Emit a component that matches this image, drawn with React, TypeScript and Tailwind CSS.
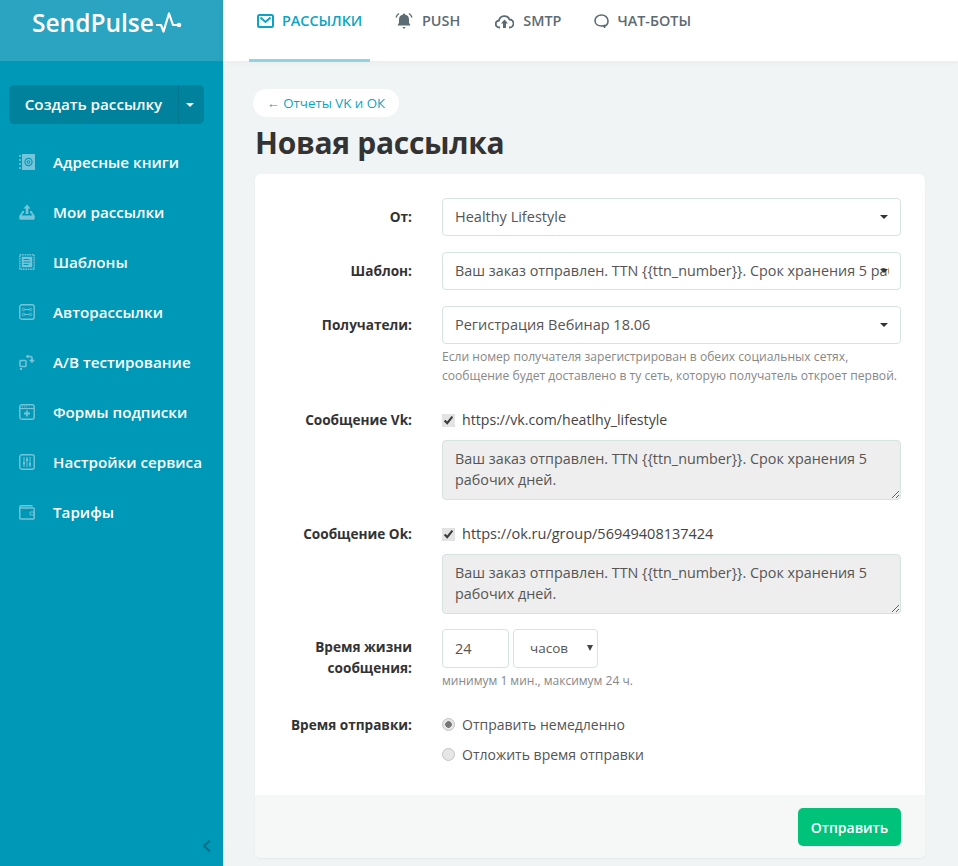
import React from "react";

const ic = "#74c5d9";

function BookIcon() {
  return (
    <svg width="16" height="18" viewBox="0 0 16 18" fill="none">
      <rect x="3" y="1" width="13" height="16" fill={ic} />
      <path d="M1 2v2M1 6v2M1 10v2M1 14v2" stroke={ic} strokeWidth="1.6" />
      <circle cx="9.5" cy="9" r="3.6" stroke="#0098b7" strokeWidth="1.1" />
      <circle cx="9.5" cy="9" r="1.4" stroke="#0098b7" strokeWidth="1" />
    </svg>
  );
}
function SendIcon() {
  return (
    <svg width="16" height="16" viewBox="0 0 16 16" fill="none">
      <path d="M5 7H3.500L0.500 11.500V14.500a1 1 0 0 0 1 1h13a1 1 0 0 0 1-1V11.500L12.500 7H11v2h.8l1.700 3h-11l1.700-3H5z" fill={ic} />
      <rect x="0.500" y="11.500" width="15" height="4" rx="1" fill={ic} />
      <path d="M8 0.500 11.500 4.500H9.300V10H6.700V4.500H4.500z" fill={ic} />
    </svg>
  );
}
function TemplateIcon() {
  return (
    <svg width="16" height="16" viewBox="0 0 16 16" fill="none">
      <rect x="0.800" y="0.800" width="14.400" height="14.400" stroke={ic} strokeWidth="1.400" strokeDasharray="1.600 0.800" />
      <rect x="2.800" y="2.800" width="10.400" height="10.400" fill={ic} />
      <path d="M4.500 5.500h6M4.500 8h7M4.500 10.500h5" stroke="#0098b7" strokeWidth="1" />
    </svg>
  );
}
function AutoIcon() {
  return (
    <svg width="16" height="16" viewBox="0 0 16 16" fill="none">
      <rect x="0.800" y="0.800" width="14.400" height="14.400" rx="2" stroke={ic} strokeWidth="1.400" />
      <path d="M6 5.500h4.500M5.500 10.500h4.500" stroke={ic} strokeWidth="1" />
      <circle cx="4.500" cy="5.500" r="1.200" stroke={ic} strokeWidth="0.900" />
      <circle cx="11.500" cy="5.500" r="1.200" stroke={ic} strokeWidth="0.900" />
      <circle cx="4.500" cy="10.500" r="1.200" stroke={ic} strokeWidth="0.900" />
      <circle cx="11.500" cy="10.500" r="1.200" stroke={ic} strokeWidth="0.900" />
    </svg>
  );
}
function AbIcon() {
  return (
    <svg width="16" height="16" viewBox="0 0 16 16" fill="none">
      <rect x="1" y="6.500" width="6" height="6" rx="0.800" stroke={ic} strokeWidth="1.500" />
      <rect x="1" y="14" width="2" height="2" fill={ic} />
      <path d="M7 2.500h4.500a1.500 1.500 0 0 1 1.500 1.500v3" stroke={ic} strokeWidth="1.700" />
      <path d="M10 5.800h6L13 9.300z" fill={ic} />
      <path d="M9.500 0.500v4L6.800 2.500z" fill={ic} />
    </svg>
  );
}
function FormIcon() {
  return (
    <svg width="16" height="16" viewBox="0 0 16 16" fill="none">
      <rect x="0.800" y="0.800" width="14.400" height="14.400" rx="2" stroke={ic} strokeWidth="1.400" />
      <path d="M1 4.500h14" stroke={ic} strokeWidth="1.200" />
      <path d="M3 2.800h1M5 2.800h1M7 2.800h1" stroke={ic} strokeWidth="0.800" />
      <path d="M8 6.500v6M5 9.500h6" stroke={ic} strokeWidth="1.800" />
    </svg>
  );
}
function SlidersIcon() {
  return (
    <svg width="16" height="16" viewBox="0 0 16 16" fill="none">
      <rect x="0.800" y="0.800" width="14.400" height="14.400" rx="2" stroke={ic} strokeWidth="1.400" />
      <path d="M5 3v10M8 3v10M11 3v10" stroke={ic} strokeWidth="1" />
      <rect x="4" y="8" width="2" height="2.500" fill={ic} />
      <rect x="7" y="4.500" width="2" height="2.500" fill={ic} />
      <rect x="10" y="9" width="2" height="2.500" fill={ic} />
    </svg>
  );
}
function WalletIcon() {
  return (
    <svg width="16" height="15" viewBox="0 0 16 15" fill="none">
      <path d="M1 3h13.500a.7.7 0 0 1 .7.7v9.600a.7.7 0 0 1-.7.7H1.800a1 1 0 0 1-1-1V2a1.200 1.200 0 0 1 1.200-1.200h11.500" stroke={ic} strokeWidth="1.400" />
      <rect x="11" y="7" width="4" height="3" rx="0.500" stroke={ic} strokeWidth="1" />
    </svg>
  );
}

const nav: [string, React.ReactNode][] = [
  ["Адресные книги", <BookIcon />],
  ["Мои рассылки", <SendIcon />],
  ["Шаблоны", <TemplateIcon />],
  ["Авторассылки", <AutoIcon />],
  ["A/B тестирование", <AbIcon />],
  ["Формы подписки", <FormIcon />],
  ["Настройки сервиса", <SlidersIcon />],
  ["Тарифы", <WalletIcon />],
];

function Caret() {
  return <span className="absolute right-[12px] top-1/2 -mt-[2px] h-0 w-0 border-x-[4px] border-t-[4px] border-x-transparent border-t-[#333]" />;
}

function FakeSelect({ children, size = "text-[14.5px]" }: { children: React.ReactNode; size?: string }) {
  return (
    <div className={`relative flex h-[38px] w-full items-center overflow-hidden rounded-[4px] border border-[#d5e3e1] bg-white pl-3 pr-[11px] text-[#555] ${size}`}>
      <span className="overflow-hidden whitespace-nowrap">{children}</span>
      <Caret />
    </div>
  );
}

function Row({ label, children, className = "", labelClass = "leading-[22px]" }: { label: React.ReactNode; children: React.ReactNode; className?: string; labelClass?: string }) {
  return (
    <div className={`flex ${className}`}>
      <div className={`w-[157px] text-right text-[13.6px] font-bold text-[#333] ${labelClass}`}>{label}</div>
      <div className="ml-[30px] w-[459px]">{children}</div>
    </div>
  );
}

function Message({ url, size }: { url: string; size: string }) {
  return (
    <div>
      <label className={`mt-[1px] flex h-5 items-center text-[#444] ${size}`}>
        <input type="checkbox" checked readOnly className="m-0 h-[13px] w-[13px] accent-[#e4e4e4]" />
        <span className="ml-[7px]">{url}</span>
      </label>
      <textarea
        readOnly
        value="Ваш заказ отправлен. TTN {{ttn_number}}. Срок хранения 5 рабочих дней."
        className="mt-[10px] block h-[60px] w-full rounded-[4px] border border-[#d5e3e1] bg-[#eeeeee] px-3 py-[7px] text-[14.35px] leading-[21px] text-[#555] outline-none"
      />
    </div>
  );
}

const radio = "m-0 h-[13px] w-[13px] appearance-none rounded-full border border-[#c4c4c4] bg-[#e6e6e6]";

export default function App() {
  return (
    <div className="flex h-[866px] w-[958px] overflow-hidden bg-[#f1f4f5] font-['Open_Sans','Noto_Sans',sans-serif]">
      <aside className="flex w-[223px] shrink-0 flex-col bg-[#0098b7]">
        <div className="flex h-[61px] items-start bg-[#2aa4c1] pl-[32px] pt-[6px]">
          <span className="text-[24.5px] font-semibold leading-[34px] text-white">SendPulse</span>
          <svg width="28" height="24" viewBox="0 0 28 24" fill="none" className="ml-[2px] mt-[5px]">
            <path d="M0 14h5l2.500 6.500L13 2.500l4 11.500h6" stroke="#fff" strokeWidth="2.200" strokeLinejoin="round" />
            <circle cx="23" cy="14" r="2.300" fill="#fff" />
          </svg>
        </div>
        <div className="mx-[9px] mt-[24px] flex h-[39px] w-[195px] rounded-[5px] bg-[#00829d] text-white">
          <div className="flex flex-1 items-center justify-center text-[15.2px] font-semibold">Создать рассылку</div>
          <div className="relative w-[26px] border-l border-[#007790]">
            <span className="absolute left-[7px] top-[18px] h-0 w-0 border-x-[4px] border-t-[4px] border-x-transparent border-t-white" />
          </div>
        </div>
        <nav className="mt-[13px] flex flex-col">
          {nav.map(([t, icon]) => (
            <div key={t} className="flex h-[50px] items-center">
              <span className="flex w-[53px] pl-[19px]">{icon}</span>
              <span className="text-[15.2px] font-semibold text-white">{t}</span>
            </div>
          ))}
        </nav>
        <div className="mt-auto flex justify-end pb-[13px] pr-[10px]">
          <svg width="12" height="14" viewBox="0 0 12 14" fill="none">
            <path d="M9 1.500 3 7l6 5.500" stroke="#00708a" strokeWidth="2" />
          </svg>
        </div>
      </aside>

      <main className="flex min-w-0 flex-1 flex-col">
        <header className="flex h-[61px] shrink-0 bg-white pl-[26px] shadow-[0_1px_6px_rgba(0,0,0,0.04)]">
          <div className="flex h-[62px] w-[121px] items-start gap-[8px] border-b-[3px] border-[#93d3e0] pl-[8px] pt-[12px] text-[14.4px] font-semibold text-[#0aa5c4]">
            <svg width="17" height="14" viewBox="0 0 17 14" fill="none" className="mt-[2px]">
              <rect x="1" y="1" width="15" height="12" rx="1.500" stroke="#0aa5c4" strokeWidth="2" />
              <path d="M3.500 3.500 8.500 8l5-4.500" stroke="#0aa5c4" strokeWidth="2" />
            </svg>
            <span className="leading-[18px]">РАССЫЛКИ</span>
          </div>
          <div className="ml-[25px] flex items-start gap-[9px] pt-[12px] text-[14.4px] font-semibold leading-[18px] text-[#5d6b74]">
            <svg width="18" height="18" viewBox="0 0 18 18" fill="#5d6b74">
              <path d="M9 1.500a1.200 1.200 0 0 1 1.200 1.200c2.500.5 3.800 2.200 3.800 4.800v3.200l1.500 2.800H2.500L4 10.700V7.500c0-2.600 1.300-4.300 3.800-4.800A1.200 1.200 0 0 1 9 1.500z" />
              <path d="M7.300 15h3.400L9 17z" />
              <path d="M4 1.500C2.500 2.500 1.500 4 1 5.500M14 1.500c1.500 1 2.500 2.500 3 4" stroke="#5d6b74" strokeWidth="1.300" fill="none" />
            </svg>
            <span>PUSH</span>
          </div>
          <div className="ml-[35px] flex items-start gap-[9px] pt-[12px] text-[14.4px] font-semibold leading-[18px] text-[#5d6b74]">
            <svg width="19" height="15" viewBox="0 0 19 15" fill="none" className="mt-[2px]">
              <path d="M5 13.500H4.500a3.500 3.500 0 0 1-.5-7A5.500 5.500 0 0 1 14.500 5.500a4 4 0 0 1 0 8H14" stroke="#5d6b74" strokeWidth="1.800" />
              <path d="M9.500 5.500 13 9.500h-2V14H8V9.500H6z" fill="#5d6b74" />
            </svg>
            <span>SMTP</span>
          </div>
          <div className="ml-[33px] flex items-start gap-[8px] pt-[12px] text-[14.4px] font-semibold leading-[18px] text-[#5d6b74]">
            <svg width="15" height="15" viewBox="0 0 15 15" fill="none" className="mt-[2px]">
              <path d="M10.500 12.500c2-1 3.500-3 3.500-5.500C14 3.500 11 1 7.500 1S1 3.500 1 6.500 3.500 12 7.500 12c1 0 2-.1 3-.5v2.500" stroke="#5d6b74" strokeWidth="1.600" />
            </svg>
            <span>ЧАТ-БОТЫ</span>
          </div>
        </header>

        <div className="flex min-h-0 flex-1 flex-col pl-[32px] pr-[33px]">
          <div className="-ml-[2px] mt-[28px] self-start rounded-full bg-white px-[13.500px] py-[4px] text-[13.3px] leading-[20px] text-[#0aa5c4]">
            ← Отчеты VK и ОК
          </div>
          <h1 className="mt-[6px] text-[30px] font-bold leading-[40px] tracking-[-0.3px] text-[#333]">Новая рассылка</h1>
          <section className="mt-[11px] flex flex-1 flex-col overflow-hidden rounded-[6px] bg-white shadow-[0_1px_2px_rgba(0,0,0,0.05)]">
            <div className="flex-1 pt-[24px]">
              <Row label="От:" className="items-center">
                <FakeSelect>Healthy Lifestyle</FakeSelect>
              </Row>
              <Row label="Шаблон:" className="mt-[16px] items-center">
                <FakeSelect size="text-[14.35px]">Ваш заказ отправлен. TTN {"{{ttn_number}}"}. Срок хранения 5 рабочих дней.</FakeSelect>
              </Row>
              <Row label="Получатели:" className="mt-[16px]" labelClass="pt-[8px] leading-[22px]">
                <FakeSelect>Регистрация Вебинар 18.06</FakeSelect>
                <p className="mt-[3px] text-[12.1px] leading-[19px] text-[#888]">
                  Если номер получателя зарегистрирован в обеих социальных сетях,
                  <br />
                  сообщение будет доставлено в ту сеть, которую получатель откроет первой.
                </p>
              </Row>
              <Row label="Сообщение Vk:" className="mt-[24px]">
                <Message url="https://vk.com/heatlhy_lifestyle" size="text-[14.15px]" />
              </Row>
              <Row label="Сообщение Ok:" className="mt-[23px]">
                <Message url="https://ok.ru/group/56949408137424" size="text-[14.5px]" />
              </Row>
              <Row label={<>Время жизни<br />сообщения:</>} className="mt-[15px]" labelClass="pt-[7px] leading-[21px]">
                <div className="flex gap-[4px]">
                  <div className="flex h-[39px] w-[67px] items-center rounded-[4px] border border-[#d5e3e1] pl-3 text-[14.5px] text-[#555]">24</div>
                  <div className="relative flex h-[39px] w-[85px] items-center rounded-[4px] border border-[#d5e3e1] pl-[16px] text-[13.5px] text-[#555]">
                    часов
                    <span className="absolute right-[4px] top-[15px] h-0 w-0 border-x-[3.500px] border-t-[6px] border-x-transparent border-t-[#444]" />
                  </div>
                </div>
                <p className="mt-[4px] text-[12px] leading-[17px] text-[#888]">минимум 1 мин., максимум 24 ч.</p>
              </Row>
              <Row label="Время отправки:" className="mt-[25px]">
                <label className="flex h-5 items-center text-[14px] text-[#555]">
                  <input type="radio" name="t" checked readOnly className={`${radio} bg-[radial-gradient(circle,#777_0,#777_3px,#e6e6e6_3.600px)]`} />
                  <span className="ml-[7px]">Отправить немедленно</span>
                </label>
                <label className="mt-[10px] flex h-5 items-center text-[14px] text-[#555]">
                  <input type="radio" name="t2" readOnly className={radio} />
                  <span className="ml-[7px]">Отложить время отправки</span>
                </label>
              </Row>
            </div>
            <div className="flex h-[63px] items-start justify-end bg-[#f6f8f8] pr-[24px] pt-[13px]">
              <button className="h-[38px] w-[103px] rounded-[5px] bg-[#00c37a] text-[14px] font-semibold text-white">Отправить</button>
            </div>
          </section>
          <div className="h-2 shrink-0" />
        </div>
      </main>
    </div>
  );
}
